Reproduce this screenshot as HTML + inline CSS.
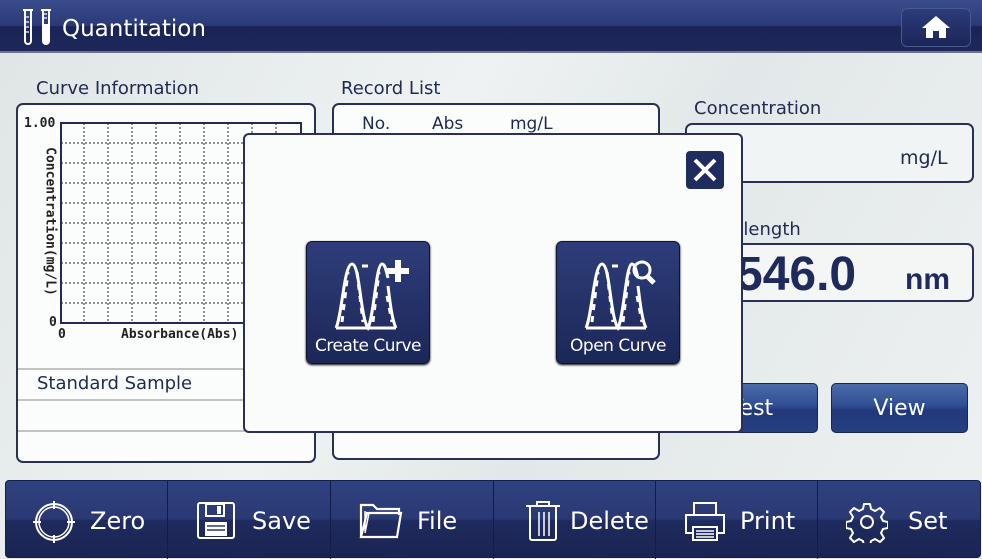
<!DOCTYPE html>
<html><head><meta charset="utf-8"><style>
*{margin:0;padding:0;box-sizing:border-box}
body{width:982px;height:558px;overflow:hidden;position:relative;font-family:"DejaVu Sans","Liberation Sans",sans-serif;background:linear-gradient(120deg,#dfe5e5 0%,#eef2f2 40%,#e2e8e9 60%,#eef1f1 100%);color:#1f2a4f}
.abs{position:absolute}
.hdr{left:0;top:0;width:982px;height:53px;background:linear-gradient(#3b4c8c 0%,#2a3a78 50%,#1b2456 52%,#1d2759 100%);border-bottom:2px solid #6d7488}
.lbl{font-size:18px;color:#1f2a4f}
.panel{background:#fbfcfc;border:2px solid #2a2f55;border-radius:7px}
.mono{font-family:"DejaVu Sans Mono","Liberation Mono",monospace;font-weight:bold;font-size:13px;color:#222}
.btn{border:1px solid #1a2550;border-radius:5px;background:linear-gradient(#4a6aa8 0%,#2f4f93 45%,#21397a 55%,#263f82 100%);color:#fff;font-size:22px;text-align:center}
.bar{left:5px;top:480px;width:976px;height:78px;background:linear-gradient(#2f4180 0%,#2a3973 50%,#1f2b5e 52%,#1a2453 100%);border-radius:4px;border:1px solid #14204a}
.seg{position:absolute;top:0;height:78px;border-right:1px solid #121c44;color:#fff;font-size:24px}
.seg span{position:absolute;top:26px}
.big{background:linear-gradient(#2e3d7a,#1c2758);border:1px solid #0e1430;border-radius:6px;color:#fff;font-size:17px;text-align:center;box-shadow:0 1px 2px #000;letter-spacing:-0.5px}
</style></head><body>
<div class="abs hdr"></div>
<svg class="abs" style="left:20px;top:8px" width="36" height="40" viewBox="0 0 36 40"><path d="M3 2h10M5 2v31a3 3 0 0 0 6 0V2" fill="none" stroke="#fff" stroke-width="2"/><path d="M6 9h3M6 14h3M6 19h3M6 24h3" stroke="#fff" stroke-width="1.3"/><path d="M21 2h10M23 2v31a3 3 0 0 0 6 0V2" fill="none" stroke="#fff" stroke-width="2"/><path d="M23 16h6v17a3 3 0 0 1-6 0z" fill="#fff"/><path d="M24 6h3M24 10h3" stroke="#fff" stroke-width="1.3"/></svg>
<div class="abs" style="left:62px;top:16px;color:#fff;font-size:23px">Quantitation</div>
<div class="abs" style="left:901px;top:8px;width:70px;height:39px;border:1px solid #4a5890;border-radius:6px;background:linear-gradient(#2c3c7a,#1b2557)"></div>
<svg class="abs" style="left:920px;top:14px" width="32" height="26" viewBox="0 0 32 26"><path d="M16 2L2 14h4v10h7v-7h6v7h7V14h4z" fill="#fff"/></svg>

<div class="abs lbl" style="left:36px;top:78px">Curve Information</div>
<div class="abs panel" style="left:16px;top:103px;width:300px;height:360px"></div>
<svg class="abs" style="left:18px;top:105px" width="296" height="355">
<g stroke="#222" stroke-width="1" stroke-dasharray="2,2">
<line x1="66" y1="18" x2="66" y2="218"/><line x1="90" y1="18" x2="90" y2="218"/><line x1="114" y1="18" x2="114" y2="218"/><line x1="138" y1="18" x2="138" y2="218"/><line x1="162" y1="18" x2="162" y2="218"/><line x1="186" y1="18" x2="186" y2="218"/><line x1="210" y1="18" x2="210" y2="218"/><line x1="234" y1="18" x2="234" y2="218"/><line x1="258" y1="18" x2="258" y2="218"/>
<line x1="43" y1="38" x2="283" y2="38"/><line x1="43" y1="58" x2="283" y2="58"/><line x1="43" y1="78" x2="283" y2="78"/><line x1="43" y1="98" x2="283" y2="98"/><line x1="43" y1="118" x2="283" y2="118"/><line x1="43" y1="138" x2="283" y2="138"/><line x1="43" y1="158" x2="283" y2="158"/><line x1="43" y1="178" x2="283" y2="178"/><line x1="43" y1="198" x2="283" y2="198"/>
</g>
<rect x="43" y="18" width="240" height="200" fill="none" stroke="#252a55" stroke-width="2"/>
<line x1="0" y1="264" x2="296" y2="264" stroke="#888"/><line x1="0" y1="295" x2="296" y2="295" stroke="#888"/><line x1="0" y1="326" x2="296" y2="326" stroke="#888"/>
</svg>
<div class="abs mono" style="left:24px;top:116px">1.00</div>
<div class="abs mono" style="left:49px;top:315px">0</div>
<div class="abs mono" style="left:58px;top:327px">0</div>
<div class="abs mono" style="left:121px;top:327px">Absorbance(Abs)</div>
<div class="abs mono" style="left:-30px;top:214px;transform:rotate(90deg);width:160px;text-align:center">Concentration(mg/L)</div>
<div class="abs" style="left:37px;top:373px;font-size:18px">Standard Sample</div>

<div class="abs lbl" style="left:341px;top:78px">Record List</div>
<div class="abs panel" style="left:332px;top:103px;width:328px;height:357px"></div>
<div class="abs" style="left:362px;top:114px;font-size:17px">No.</div>
<div class="abs" style="left:432px;top:114px;font-size:17px">Abs</div>
<div class="abs" style="left:510px;top:114px;font-size:17px">mg/L</div>

<div class="abs lbl" style="left:694px;top:98px">Concentration</div>
<div class="abs panel" style="left:685px;top:123px;width:289px;height:60px;background:#f1f4f4"></div>
<div class="abs" style="left:900px;top:147px;font-size:19px">mg/L</div>
<div class="abs lbl" style="left:694px;top:219px">Wavelength</div>
<div class="abs panel" style="left:685px;top:243px;width:289px;height:59px;background:#f4f6f6"></div>
<div class="abs" style="left:736px;top:247px;font-family:'Liberation Sans',sans-serif;font-weight:bold;font-size:48px;color:#1c2a5c">546.0</div>
<div class="abs" style="left:905px;top:263px;font-family:'Liberation Sans',sans-serif;font-weight:bold;font-size:30px;color:#1c2a5c">nm</div>
<div class="abs btn" style="left:685px;top:383px;width:133px;height:50px;line-height:50px">Test</div>
<div class="abs btn" style="left:831px;top:383px;width:137px;height:50px;line-height:50px">View</div>

<div class="abs" style="left:243px;top:133px;width:500px;height:300px;background:#fafcfc;border:2px solid #2a2f55;border-radius:6px"></div>
<div class="abs" style="left:686px;top:151px;width:38px;height:38px;background:#1f2c5e;border-radius:4px"></div>
<svg class="abs" style="left:686px;top:151px" width="38" height="38"><path d="M9 9L29 29M29 9L9 29" stroke="#fff" stroke-width="4"/></svg>
<div class="abs big" style="left:306px;top:241px;width:124px;height:123px"><div style="position:absolute;left:0;right:0;top:94px">Create Curve</div></div>
<div class="abs big" style="left:556px;top:241px;width:124px;height:123px"><div style="position:absolute;left:0;right:0;top:94px">Open Curve</div></div>
<svg class="abs" style="left:332px;top:256px" width="80" height="78" viewBox="0 0 80 78"><g fill="none" stroke="#fff" stroke-width="3"><path d="M4 72C10 60 12 8 20 8S28 60 36 72C42 60 44 8 50 8c3 0 4 6 6 14"/><path d="M56 30c2 16 4 34 8 42"/><path d="M4 72h60"/></g><g stroke="#fff" stroke-width="3" stroke-dasharray="6,6"><path d="M10 66L16 16M25 16L31 66M41 66L47 16M55 40L60 66"/></g><path d="M30 10h6" stroke="#fff" stroke-width="3"/><path d="M66 4v22M55 15h22" stroke="#fff" stroke-width="6"/></svg>
<svg class="abs" style="left:582px;top:256px" width="80" height="78" viewBox="0 0 80 78"><g fill="none" stroke="#fff" stroke-width="3"><path d="M4 72C10 60 12 8 20 8S28 60 36 72C42 60 44 8 50 8c3 0 4 6 6 14"/><path d="M56 30c2 16 4 34 8 42"/><path d="M4 72h60"/></g><g stroke="#fff" stroke-width="3" stroke-dasharray="6,6"><path d="M10 66L16 16M25 16L31 66M41 66L47 16M55 40L60 66"/></g><path d="M30 10h6" stroke="#fff" stroke-width="3"/><circle cx="60" cy="14" r="8" fill="none" stroke="#fff" stroke-width="3"/><path d="M65 20l7 7" stroke="#fff" stroke-width="5"/></svg>

<div class="abs bar">
<div class="seg" style="left:0;width:162px"><svg style="position:absolute;left:27px;top:20px" width="42" height="42"><circle cx="21" cy="21" r="18" fill="none" stroke="#fff" stroke-width="2"/><circle cx="21" cy="21" r="15" fill="none" stroke="#fff" stroke-width="1.5"/><path d="M21 0v8M21 34v8M0 21h8M34 21h8" stroke="#fff" stroke-width="2"/></svg><span style="left:84px">Zero</span></div>
<div class="seg" style="left:162px;width:163px"><svg style="position:absolute;left:28px;top:20px" width="40" height="40"><rect x="2" y="2" width="36" height="35" rx="2" fill="none" stroke="#fff" stroke-width="2"/><rect x="10" y="3" width="18" height="12" fill="none" stroke="#fff" stroke-width="2"/><rect x="21" y="5" width="4" height="8" fill="#fff"/><rect x="9" y="21" width="22" height="14" fill="#fff"/><path d="M11 25h18M11 29h18" stroke="#2a3973" stroke-width="1.5"/></svg><span style="left:84px">Save</span></div>
<div class="seg" style="left:325px;width:163px"><svg style="position:absolute;left:28px;top:20px" width="46" height="40"><path d="M2 36V4h12l4 4h22v6M2 36h36l4-24H8L2 36z" fill="none" stroke="#fff" stroke-width="2.2"/><path d="M6 10v20M10 12l-4 20" stroke="#fff" stroke-width="1.5"/></svg><span style="left:86px">File</span></div>
<div class="seg" style="left:488px;width:162px"><svg style="position:absolute;left:30px;top:19px" width="40" height="44"><path d="M2 6h34M13 6V2h12v4M6 6v32a2 2 0 0 0 2 2h22a2 2 0 0 0 2-2V6" fill="none" stroke="#fff" stroke-width="2"/><path d="M15 12v24M20 12v24M25 12v24" stroke="#fff" stroke-width="1.5"/></svg><span style="left:76px">Delete</span></div>
<div class="seg" style="left:650px;width:162px"><svg style="position:absolute;left:28px;top:20px" width="42" height="42"><path d="M10 14V2h22v12" fill="none" stroke="#fff" stroke-width="2"/><path d="M8 32H2V14h38v18h-6" fill="none" stroke="#fff" stroke-width="2"/><rect x="9" y="26" width="24" height="13" fill="none" stroke="#fff" stroke-width="2"/><path d="M12 30h18M12 33h18M12 36h18" stroke="#fff" stroke-width="1.5"/></svg><span style="left:84px">Print</span></div>
<div class="seg" style="left:812px;width:164px;border:none"><svg style="position:absolute;left:28px;top:20px" width="42" height="42" viewBox="0 0 42 42"><path d="M18 3h6l1 5 4 2 5-3 4 4-3 5 2 4 5 1v6l-5 1-2 4 3 5-4 4-5-3-4 2-1 5h-6l-1-5-4-2-5 3-4-4 3-5-2-4-5-1v-6l5-1 2-4-3-5 4-4 5 3 4-2z" fill="none" stroke="#fff" stroke-width="2" stroke-linejoin="round"/><circle cx="21" cy="21" r="6" fill="none" stroke="#fff" stroke-width="2"/></svg><span style="left:90px">Set</span></div>
</div>
</body></html>
